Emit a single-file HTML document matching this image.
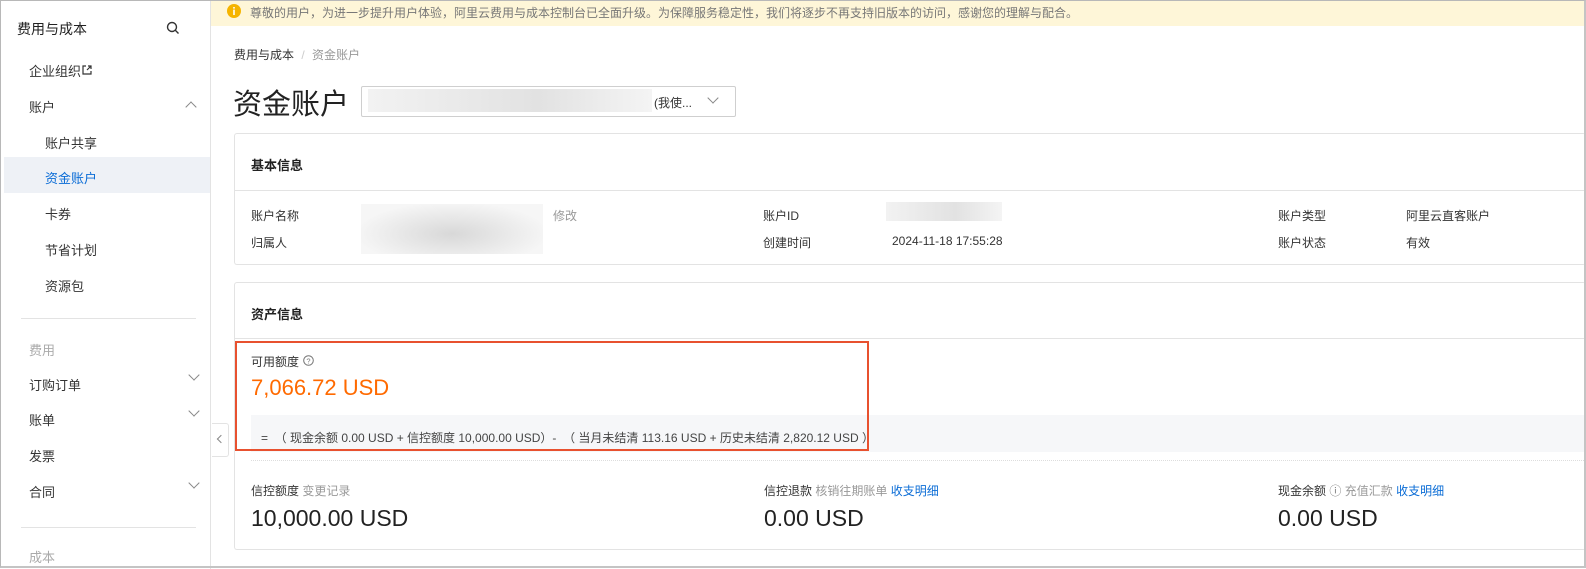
<!DOCTYPE html>
<html><head><meta charset="utf-8"><style>
*{margin:0;padding:0;box-sizing:border-box}
body{width:1586px;height:569px;overflow:hidden;background:#fff;font-family:"Liberation Sans","Noto Sans CJK SC",sans-serif;color:#333;font-size:12px;position:relative}
.a{position:absolute;white-space:nowrap}
.frame{position:absolute;left:0;top:0;width:1586px;height:568px;border:1px solid #b8b8b8;border-right:2px solid #c4c4c4;border-bottom:2px solid #c4c4c4;pointer-events:none;z-index:10}
.side{position:absolute;left:0;top:0;width:211px;height:569px;border-right:1px solid #e3e3e3;background:#fff}
.chev{position:absolute;width:8px;height:8px;border-right:1.2px solid #888;border-bottom:1.2px solid #888;transform:rotate(45deg)}
.card{position:absolute;left:234px;right:0;border:1px solid #e3e3e3;border-right:none;border-radius:3px;background:#fff}
.blur{position:absolute;background:linear-gradient(90deg,#f2f2f2,#e2e2e2 60%,#f4f4f4)}
.g{color:#999}.b{color:#0a6cd6}
</style></head><body>
<div class="side">
 <div class="a" style="left:17px;top:19px;font-size:14px;color:#222">费用与成本</div>
 <svg class="a" style="left:166px;top:21px" width="14" height="14" viewBox="0 0 14 14"><circle cx="6" cy="6" r="4.5" fill="none" stroke="#333" stroke-width="1.4"/><path d="M9.3 9.3 L12.5 12.5" stroke="#333" stroke-width="1.4"/></svg>
 <div class="a" style="left:29px;top:61px;font-size:13px">企业组织</div>
 <svg class="a" style="left:82px;top:65px" width="10" height="10" viewBox="0 0 10 10"><path d="M4 1H1v8h8V6M6 1h3v3M9 1L5 5" fill="none" stroke="#333" stroke-width="1.2"/></svg>
 <div class="a" style="left:29px;top:97px;font-size:13px">账户</div>
 <div class="chev" style="left:187px;top:103px;transform:rotate(225deg)"></div>
 <div class="a" style="left:45px;top:133px;font-size:13px">账户共享</div>
 <div class="a" style="left:4px;top:157px;width:206px;height:36px;background:#eef1f6"></div>
 <div class="a" style="left:45px;top:168px;font-size:13px;color:#0a6cd6">资金账户</div>
 <div class="a" style="left:45px;top:204px;font-size:13px">卡券</div>
 <div class="a" style="left:45px;top:240px;font-size:13px">节省计划</div>
 <div class="a" style="left:45px;top:276px;font-size:13px">资源包</div>
 <div class="a" style="left:21px;top:318px;width:175px;height:1px;background:#e3e3e3"></div>
 <div class="a" style="left:29px;top:340px;font-size:13px;color:#aaa">费用</div>
 <div class="a" style="left:29px;top:375px;font-size:13px">订购订单</div><div class="chev" style="left:190px;top:371px"></div>
 <div class="a" style="left:29px;top:410px;font-size:13px">账单</div><div class="chev" style="left:190px;top:407px"></div>
 <div class="a" style="left:29px;top:446px;font-size:13px">发票</div>
 <div class="a" style="left:29px;top:482px;font-size:13px">合同</div><div class="chev" style="left:190px;top:479px"></div>
 <div class="a" style="left:21px;top:527px;width:175px;height:1px;background:#e3e3e3"></div>
 <div class="a" style="left:29px;top:547px;font-size:13px;color:#aaa">成本</div>
</div>
<div class="a" style="left:212px;top:423px;width:17px;height:34px;border:1px solid #e3e3e3;border-left:none;background:#fff;border-radius:0 3px 3px 0"></div>
<div class="chev" style="left:218px;top:436px;width:6px;height:6px;transform:rotate(135deg)"></div>
<div class="a" style="left:211px;top:0;width:1375px;height:26px;background:#fef6d8"></div>
<svg class="a" style="left:227px;top:4px" width="14" height="14" viewBox="0 0 14 14"><circle cx="7" cy="7" r="7" fill="#f5b400"/><rect x="6.2" y="3" width="1.6" height="1.6" fill="#fff"/><rect x="6.2" y="5.6" width="1.6" height="5.4" fill="#fff"/></svg>
<div class="a" style="left:250px;top:4px;font-size:12px;color:#777">尊敬的用户，为进一步提升用户体验，阿里云费用与成本控制台已全面升级。为保障服务稳定性，我们将逐步不再支持旧版本的访问，感谢您的理解与配合。</div>
<div class="a" style="left:234px;top:46px;font-size:12px;color:#333">费用与成本 <span style="color:#ccc;margin:0 4px">/</span> <span class="g">资金账户</span></div>
<div class="a" style="left:233px;top:81px;font-size:29px;color:#222">资金账户</div>
<div class="a" style="left:361px;top:86px;width:375px;height:31px;border:1px solid #cfcfcf;border-radius:2px"></div>
<div class="blur" style="left:368px;top:89px;width:284px;height:23px"></div>
<div class="a" style="left:654px;top:94px;font-size:12px;color:#333">(我使...</div>
<div class="chev" style="left:709px;top:94px"></div>
<div class="card" style="top:133px;height:132px">
 <div class="a" style="left:16px;top:21px;font-size:13px;font-weight:bold;color:#222">基本信息</div>
 <div class="a" style="left:0;right:0;top:56px;height:1px;background:#e3e3e3"></div>
 <div class="a" style="left:16px;top:73px">账户名称</div>
 <div class="a" style="left:16px;top:100px">归属人</div>
 <div class="blur" style="left:126px;top:70px;width:182px;height:50px;background:radial-gradient(ellipse at 50% 60%,#d8d8d8,#f6f6f6 75%)"></div>
 <div class="a g" style="left:318px;top:73px">修改</div>
 <div class="a" style="left:528px;top:73px">账户ID</div>
 <div class="a" style="left:528px;top:100px">创建时间</div>
 <div class="blur" style="left:651px;top:68px;width:116px;height:19px"></div>
 <div class="a" style="left:657px;top:100px">2024-11-18 17:55:28</div>
 <div class="a" style="left:1043px;top:73px">账户类型</div>
 <div class="a" style="left:1043px;top:100px">账户状态</div>
 <div class="a" style="left:1171px;top:73px">阿里云直客账户</div>
 <div class="a" style="left:1171px;top:100px">有效</div>
</div>
<div class="card" style="top:282px;height:268px">
 <div class="a" style="left:16px;top:21px;font-size:13px;font-weight:bold;color:#222">资产信息</div>
 <div class="a" style="left:0;right:0;top:55px;height:1px;background:#e3e3e3"></div>
 <div class="a" style="left:16px;top:70px">可用额度</div>
 <svg class="a" style="left:68px;top:72px" width="11" height="11" viewBox="0 0 11 11"><circle cx="5.5" cy="5.5" r="4.8" fill="none" stroke="#777"/><text x="5.5" y="8.3" font-size="7.5" text-anchor="middle" fill="#777" font-family="Liberation Sans">?</text></svg>
 <div class="a" style="left:16px;top:92px;font-size:22px;color:#ff6a00">7,066.72 USD</div>
 <div class="a" style="left:16px;right:0;top:132px;height:37px;background:#f6f7f9"></div>
 <div class="a" style="left:26px;top:146px;font-size:12px;color:#444">=&nbsp;&nbsp;（ 现金余额 0.00 USD + 信控额度 10,000.00 USD）-&nbsp;&nbsp;（ 当月未结清 113.16 USD + 历史未结清 2,820.12 USD ）</div>
 <div class="a" style="left:16px;right:0;top:177px;border-top:1px dotted #ddd"></div>
 <div class="a" style="left:16px;top:199px">信控额度 <span class="g">变更记录</span></div>
 <div class="a" style="left:16px;top:222px;font-size:23px;color:#222">10,000.00 USD</div>
 <div class="a" style="left:529px;top:199px">信控退款 <span class="g">核销往期账单</span> <span class="b">收支明细</span></div>
 <div class="a" style="left:529px;top:222px;font-size:23px;color:#222">0.00 USD</div>
 <div class="a" style="left:1043px;top:199px">现金余额 <span style="color:#777">ⓘ</span> <span class="g">充值汇款</span> <span class="b">收支明细</span></div>
 <div class="a" style="left:1043px;top:222px;font-size:23px;color:#222">0.00 USD</div>
</div>
<div class="a" style="left:235px;top:341px;width:634px;height:110px;border:2px solid #e8512f"></div>
<div class="frame"></div>
</body></html>
